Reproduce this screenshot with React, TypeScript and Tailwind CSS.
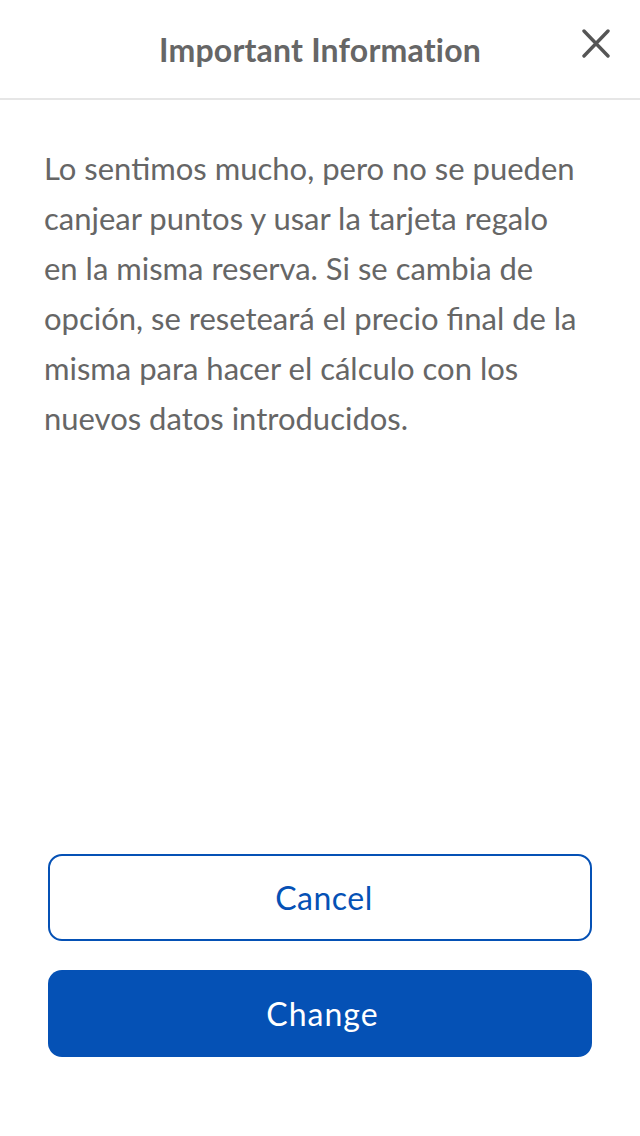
export default function App() {
  return (
    <div className="flex h-[1136px] flex-col bg-white font-['Lato','Noto_Sans',sans-serif] text-[#666666]">
      <header className="relative flex h-[100px] shrink-0 items-center justify-center border-b-2 border-[#e6e6e6] pt-[1px]">
        <h1 className="text-[32px] font-bold leading-none tracking-[0.2px]">Important Information</h1>
        <button className="absolute right-[30px] top-[29px] text-[#555555]" aria-label="Close">
          <svg width="28" height="29" viewBox="0 0 28 29" fill="none" stroke="currentColor" strokeWidth="3.4" strokeLinecap="round">
            <path d="M2 2L26 27M26 2L2 27" />
          </svg>
        </button>
      </header>

      <main className="flex-1 pl-[44px] pr-[52px] pt-[43px]">
        <p className="text-[31px] leading-[50px]">
          Lo sentimos mucho, pero no se pueden canjear puntos y usar la tarjeta regalo en la misma
          reserva. Si se cambia de opción, se reseteará el precio final de la misma para hacer el
          cálculo con los nuevos datos introducidos.
        </p>
      </main>

      <footer className="flex flex-col gap-[29px] px-[48px] pb-[79px]">
        <button className="h-[87px] rounded-[14px] border-2 border-[#0551b5] bg-white pl-[8px] text-[32px] tracking-[0.5px] text-[#0551b5]">
          Cancel
        </button>
        <button className="h-[87px] rounded-[14px] bg-[#0551b5] pl-[5px] text-[32px] tracking-[1px] text-white">
          Change
        </button>
      </footer>
    </div>
  );
}
